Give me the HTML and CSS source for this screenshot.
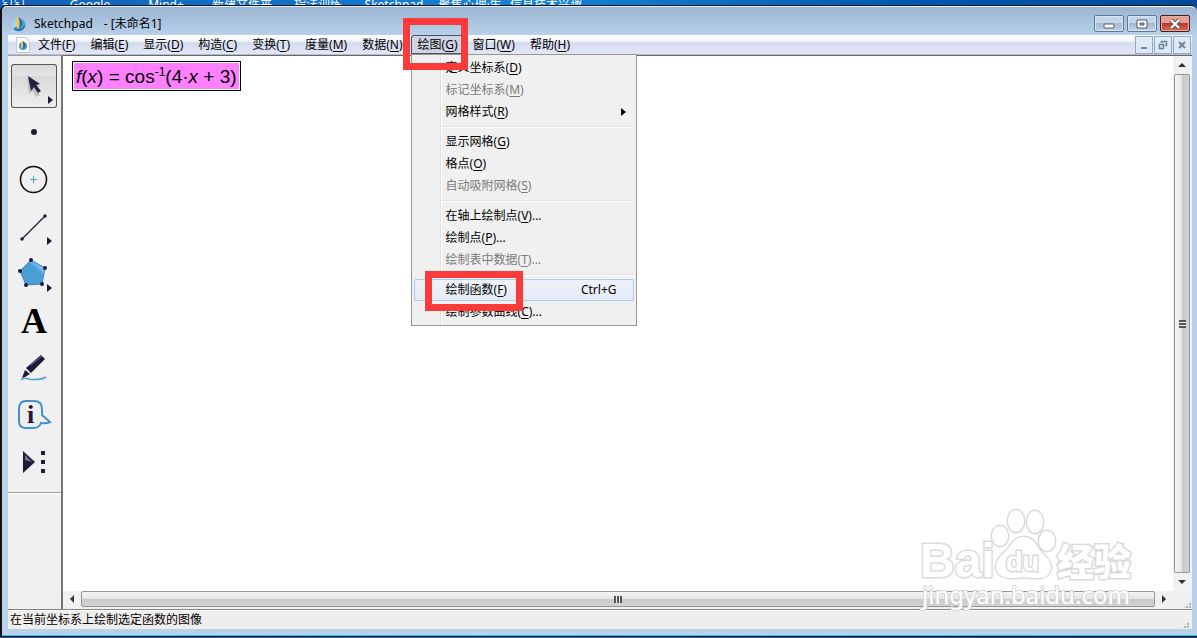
FILE: index.html
```html
<!DOCTYPE html>
<html lang="zh-CN">
<head>
    <meta charset="UTF-8">
    <meta name="viewport" content="width=device-width, initial-scale=1.0">
    <title>Sketchpad - [未命名1]</title>
    <link rel="stylesheet" href="styles.css">
</head>
<body>

    <div class="desktop-icons">
        <span>钉钉</span>
        <span>Google</span>
        <span>Mind+</span>
        <span>新建文件夹</span>
        <span>指法训练</span>
        <span>Sketchpad</span>
        <span>聚焦心理·生</span>
        <span>信息技术兴趣</span>
    </div>

    <div class="window">
        <header class="title-bar">
            <svg class="app-icon" width="16" height="16" viewBox="0 0 16 16">
                <circle cx="8" cy="9" r="6.500" fill="#4a9dd2"/>
                <path d="M2 12a6 6 0 0 1 4-9l1 7z" fill="#a5d6ef"/>
                <path d="M7 13C4 9 5 4 6 0c4 4 5 9 1 13z" fill="#f0c65a"/>
                <path d="M7 1c5 3 6 8 1 12 1-4 1-8-1-12z" fill="#1b6fa5"/>
                <path d="M3 13c3 2 8 1 11-3" fill="none" stroke="#17517d"/>
            </svg>
            <span class="app-name">Sketchpad</span>
            <span class="doc-name">- [未命名1]</span>
            <div class="window-buttons">
                <button aria-label="最小化">
                    <svg width="12" height="12" viewBox="0 0 12 12"><rect x="1" y="6" width="10" height="4" rx="1" fill="#fff" stroke="#555b68"/></svg>
                </button>
                <button aria-label="最大化">
                    <svg width="12" height="12" viewBox="0 0 12 12"><path d="M1 2h10v8H1z" fill="#fff" stroke="#555b68"/><path d="M4 5h4v2H4z" fill="#9bb4cd" stroke="#555b68"/></svg>
                </button>
                <button class="close" aria-label="关闭">
                    <svg width="12" height="12" viewBox="0 0 12 12"><path d="M2 2l8 8M10 2l-8 8" stroke="#5b4a50" stroke-width="4"/><path d="M2 2l8 8M10 2l-8 8" stroke="#fff" stroke-width="2.400"/></svg>
                </button>
            </div>
        </header>

        <div class="client">
            <nav class="menu-bar">
                <svg class="doc-icon" width="14" height="16" viewBox="0 0 14 16">
                    <path d="M.5.5h9l4 4v11H.5z" fill="#fff" stroke="#c3c8d0"/>
                    <circle cx="7" cy="9" r="4" fill="#3f97cf"/>
                    <path d="M6 12c-2-3-1-6 0-9 3 3 3 6 0 9z" fill="#f0c65a"/>
                    <path d="M7 4c3 3 3 6 0 8z" fill="#1b6fa5"/>
                </svg>
                <ul class="menus">
                    <li><button>文件(<u>F</u>)</button></li>
                    <li><button>编辑(<u>E</u>)</button></li>
                    <li><button>显示(<u>D</u>)</button></li>
                    <li><button>构造(<u>C</u>)</button></li>
                    <li><button>变换(<u>T</u>)</button></li>
                    <li><button>度量(<u>M</u>)</button></li>
                    <li><button>数据(<u>N</u>)</button></li>
                    <li class="open">
                        <button aria-expanded="true">绘图(<u>G</u>)</button>
                        <div class="dropdown">
                            <button>定义坐标系(<u>D</u>)</button>
                            <button disabled>标记坐标系(<u>M</u>)</button>
                            <button>网格样式(<u>R</u>)
                                <svg class="submenu" width="5" height="8" viewBox="0 0 5 8"><path d="M0 0l5 4-5 4z"/></svg>
                            </button>
                            <hr>
                            <button>显示网格(<u>G</u>)</button>
                            <button>格点(<u>O</u>)</button>
                            <button disabled>自动吸附网格(<u>S</u>)</button>
                            <hr>
                            <button>在轴上绘制点(<u>V</u>)...</button>
                            <button>绘制点(<u>P</u>)...</button>
                            <button disabled>绘制表中数据(<u>T</u>)...</button>
                            <hr>
                            <button class="active">绘制函数(<u>F</u>)<kbd>Ctrl+G</kbd><span class="mark mark-item"></span></button>
                            <button>绘制参数曲线(<u>C</u>)...</button>
                        </div>
                        <span class="mark mark-menu"></span>
                    </li>
                    <li><button>窗口(<u>W</u>)</button></li>
                    <li><button>帮助(<u>H</u>)</button></li>
                </ul>
                <div class="doc-buttons">
                    <button aria-label="最小化文档"><svg width="10" height="10" viewBox="0 0 10 10"><path d="M2 7h6v2H2z" fill="#71818f"/></svg></button>
                    <button aria-label="还原文档"><svg width="10" height="10" viewBox="0 0 10 10"><path d="M3.500 3V1.500h5v4H7M3 1.500h6" fill="none" stroke="#71818f" stroke-width="1.500"/><path d="M1.500 4.500h4v4h-4zM1 4.500h5" fill="none" stroke="#71818f" stroke-width="1.500"/></svg></button>
                    <button aria-label="关闭文档"><svg width="10" height="10" viewBox="0 0 10 10"><path d="M2 2l6 6M8 2L2 8" stroke="#71818f" stroke-width="2"/></svg></button>
                </div>
            </nav>

            <div class="workspace">
                <aside class="toolbox">
                    <button class="selected" aria-label="移动箭头工具">
                        <svg width="46" height="44" viewBox="0 0 46 44">
                            <path d="M16 14l13 8-4 2 4 7-4 2-3-6-4 3z" fill="#888" opacity=".4"/>
                            <path d="M17 12l12 8-4 1 5 6-3 2-4-6-3 4z" fill="#25203f"/>
                            <path d="M37 32l5 4-5 4z" fill="#1f1a38"/>
                        </svg>
                    </button>
                    <button aria-label="点工具">
                        <svg width="46" height="44" viewBox="0 0 46 44"><circle cx="23" cy="21" r="3" fill="#1f1a38"/></svg>
                    </button>
                    <button aria-label="圆工具">
                        <svg width="46" height="44" viewBox="0 0 46 44">
                            <circle cx="22.500" cy="21.500" r="13" fill="none" stroke="#111" stroke-width="1.600"/>
                            <path d="M19 21.500h7M22.500 18v7" stroke="#4a9dd2"/>
                        </svg>
                    </button>
                    <button aria-label="线段直尺工具">
                        <svg width="46" height="44" viewBox="0 0 46 44" fill="#1f1a38">
                            <path d="M11 34L34 11" stroke="#1f1a38" stroke-width="1.300"/>
                            <circle cx="11" cy="34" r="1.700"/><circle cx="34" cy="11" r="1.700"/>
                            <path d="M36 32l5 4-5 4z"/>
                        </svg>
                    </button>
                    <button aria-label="多边形工具">
                        <svg width="46" height="44" viewBox="0 0 46 44" fill="#1f1a38">
                            <defs><linearGradient id="poly" x1="1" y1="0" x2="0.300" y2="0.700"><stop offset=".2" stop-color="#9cd0f2"/><stop offset=".55" stop-color="#4a9dd6"/></linearGradient></defs>
                            <path d="M9 19L20 8l14 8-3 16-16 1z" fill="url(#poly)" stroke="#3a86bd"/>
                            <circle cx="9" cy="19" r="2"/><circle cx="20" cy="8" r="2"/><circle cx="34" cy="16" r="2"/><circle cx="31" cy="32" r="2"/><circle cx="15" cy="33" r="2"/>
                            <path d="M36 32l5 4-5 4z"/>
                        </svg>
                    </button>
                    <button class="text-tool" aria-label="文字工具">A</button>
                    <button aria-label="标记工具">
                        <svg width="46" height="44" viewBox="0 0 46 44">
                            <path d="M10 34c3-3 5-2 7-1 7 1 13 1 18-2" fill="none" stroke="#4a9dd6" stroke-width="1.600"/>
                            <path d="M11 32l3-8 5 4-5 3z" fill="#1f1a38"/>
                            <path d="M15 22L30 9l4 4-14 14z" fill="#1f1a38"/>
                            <path d="M20 19L31 10" stroke="#77738c"/>
                            <path d="M14 22l6 6" stroke="#efefef"/>
                        </svg>
                    </button>
                    <button class="info-tool" aria-label="信息工具">
                        <svg width="46" height="44" viewBox="0 0 46 44">
                            <path d="M15 8h8q8 0 8 8v6l8 7q-4 2-9 1-2 5-7 5h-8q-7 0-7-7V16q0-8 7-8z" fill="#efefef" stroke="#4391cd" stroke-width="2"/>
                            <text x="16" y="30" class="info-letter">i</text>
                        </svg>
                    </button>
                    <button aria-label="自定义工具">
                        <svg width="46" height="44" viewBox="0 0 46 44" fill="#1f1a38">
                            <path d="M12 11l12 11-12 11z"/><path d="M14 15l7 7-7-2z" fill="#77738c"/>
                            <path d="M30 11h4v4h-4zM30 20h4v4h-4zM30 29h4v4h-4z"/>
                        </svg>
                    </button>
                </aside>

                <div class="document">
                    <main class="canvas">
                        <div class="formula"><i>f</i>(<i>x</i>) = cos<sup>-1</sup>(4·<i>x</i> + 3)</div>
                        <svg class="watermark" width="220" height="106" viewBox="0 0 220 106">
                            <g class="outline">
                                <text class="brand" x="2" y="71">Bai</text>
                                <ellipse cx="82" cy="30" rx="8" ry="10"/>
                                <ellipse cx="98" cy="15" rx="8" ry="11"/>
                                <ellipse cx="117" cy="16" rx="8" ry="11"/>
                                <ellipse cx="129" cy="35" rx="8" ry="10"/>
                                <path d="M106 31c7 0 11 5 15 12 5 7 12 11 12 18-1 13-13 12-27 10-14 2-26 2-28-9-1-8 7-14 12-19 4-7 8-12 16-12z"/>
                                <text class="du" x="88" y="65">du</text>
                                <text class="jingyan" x="139" y="70">经验</text>
                            </g>
                            <text class="site" x="4" y="98">jingyan.baidu.com</text>
                        </svg>
                    </main>
                    <div class="scrollbar vertical">
                        <button aria-label="向上滚动"><svg width="8" height="4" viewBox="0 0 8 4"><path d="M0 4l4-4 4 4z"/></svg></button>
                        <div class="thumb"><span></span></div>
                        <button aria-label="向下滚动"><svg width="8" height="4" viewBox="0 0 8 4"><path d="M0 0l4 4 4-4z"/></svg></button>
                    </div>
                    <div class="scrollbar horizontal">
                        <button aria-label="向左滚动"><svg width="4" height="8" viewBox="0 0 4 8"><path d="M4 0L0 4l4 4z"/></svg></button>
                        <div class="thumb"><span></span></div>
                        <button aria-label="向右滚动"><svg width="4" height="8" viewBox="0 0 4 8"><path d="M0 0l4 4-4 4z"/></svg></button>
                    </div>
                    <div class="grip"></div>
                </div>
            </div>

            <footer class="status-bar">
                <span>在当前坐标系上绘制选定函数的图像</span>
                <div class="grip"></div>
            </footer>
        </div>
    </div>

</body>
</html>
```

FILE: styles.css
```css
* {
    box-sizing: border-box;
}

body {
    margin: 0;
    height: 100vh;
    display: flex;
    flex-direction: column;
    overflow: hidden;
    background: linear-gradient(90deg, #1060b8, #1583d8 45%, #0058b5 75%, #004a9c);
    font-family: "Noto Sans", "Noto Sans CJK SC", sans-serif;
    font-size: 12px;
    line-height: 18px;
    color: #000;
}

button {
    margin: 0;
    padding: 0;
    border: none;
    background: none;
    font: inherit;
    color: inherit;
}

u {
    text-underline-offset: 2px;
}

/* desktop labels behind the window */
.desktop-icons {
    display: grid;
    grid-template-columns: repeat(8, 76px);
    height: 5px;
    margin-left: -24px;
    overflow: hidden;
    color: #fff;
    line-height: 10px;
    text-align: center;
    white-space: nowrap;
}

.window {
    flex: 1;
    min-height: 0;
    display: flex;
    flex-direction: column;
    margin-bottom: 1px;
    padding: 0 5px 7px 6px;
    border: 1px solid #111;
    border-right: none;
    border-left-width: 2px;
    border-radius: 6px 6px 0 0;
    background: linear-gradient(#99b4d1, #b9d1ea 30px);
    box-shadow: inset 0 1px #e8f1fa, inset 0 -1px #3cc3dc;
}

.title-bar {
    display: flex;
    align-items: center;
    height: 29px;
    padding: 6px 0 0 3px;
    flex: none;
}

.app-name {
    margin-left: 7px;
}

.doc-name {
    margin-left: 11px;
}

.window-buttons {
    display: flex;
    gap: 3px;
    margin-left: auto;
    margin-right: 2px;
}

.window-buttons button {
    display: flex;
    align-items: center;
    justify-content: center;
    width: 30px;
    height: 17px;
    border: 1px solid #5f7893;
    border-radius: 2px;
    background: linear-gradient(#c3d5e8 50%, #a2bad3 50%, #bcd3e9);
    box-shadow: inset 0 0 0 1px #d9e6f2;
}

.window-buttons .close {
    border-color: #4d1720;
    background: linear-gradient(#dfa193 50%, #b93a28 50%, #cf6f57);
    box-shadow: inset 0 0 0 1px #e7aea0;
}

.client {
    flex: 1;
    min-height: 0;
    display: flex;
    flex-direction: column;
    background: #f0f0f0;
}

/* menu bar */
.menu-bar {
    display: flex;
    align-items: center;
    flex: none;
    height: 20px;
    padding: 0 1px 0 8px;
    background: linear-gradient(#fff, #eef1f8 7px, #d5dbee 7px, #e2e7f6);
    border-bottom: 1px solid #b6bcc8;
}

.menus {
    display: flex;
    gap: 1px;
    margin: 0 0 0 1px;
    padding: 0;
    list-style: none;
}

.menus > li {
    position: relative;
}

.menus > li > button {
    display: block;
    height: 19px;
    padding: 1px 7px 0;
    border-radius: 3px 3px 0 0;
    white-space: nowrap;
}

.menus > .open > button {
    background: #ced3e5;
    box-shadow: inset 0 0 0 1px #50545f;
}

.doc-buttons {
    display: flex;
    gap: 1px;
    margin-left: auto;
}

.doc-buttons button {
    display: flex;
    align-items: center;
    justify-content: center;
    width: 18px;
    height: 18px;
    border: 1px solid #91a8bd;
    background: #ddebf9;
}

.dropdown {
    position: absolute;
    top: 100%;
    left: 0;
    z-index: 2;
    width: 226px;
    padding: 2px;
    border: 1px solid #979797;
    background: linear-gradient(90deg, #f0f0f0 28px, #e0e0e0 28px, #e0e0e0 29px, #fff 29px, #fff 30px, #f0f0f0 30px);
}

.dropdown button {
    position: relative;
    display: flex;
    align-items: center;
    width: 100%;
    height: 22px;
    padding: 0 17px 0 32px;
    border-radius: 2px;
    white-space: nowrap;
}

.dropdown button:disabled {
    color: #7a7a7a;
}

.dropdown .active {
    background: linear-gradient(#eff3f9, #e4ebf5);
    box-shadow: inset 0 0 0 1px #aaccf3;
}

.dropdown hr {
    height: 2px;
    margin: 3px 0 3px 28px;
    border: none;
    border-top: 1px solid #e0e0e0;
    background: #fff;
}

.dropdown kbd {
    margin-left: auto;
    font-family: inherit;
}

.submenu {
    margin-left: auto;
    margin-right: -9px;
}

/* red marker frames */
.mark {
    position: absolute;
    z-index: 3;
    border: 7px solid #fb3a3a;
    pointer-events: none;
}

.mark-menu {
    inset: -17px -4px -16px -8px;
}

.mark-item {
    top: -8px;
    left: 11px;
    width: 98px;
    height: 40px;
}

/* work area */
.workspace {
    flex: 1;
    min-height: 0;
    display: flex;
    border-bottom: 1px solid #868686;
}

.toolbox {
    display: flex;
    flex-direction: column;
    flex: none;
    width: 55px;
    gap: 3px;
    padding: 8px 3px 0;
    border-top: 1px solid #a0a0a0;
    border-right: 2px solid #767676;
}

.toolbox::after {
    content: "";
    margin: 5px -3px 0;
    border-top: 1px solid #a0a0a0;
    border-bottom: 1px solid #fff;
}

.toolbox button {
    display: flex;
    align-items: center;
    justify-content: center;
    width: 46px;
    height: 44px;
}

.toolbox .selected {
    border-radius: 3px;
    background: linear-gradient(#d9d9d9, #e4e4e4 26%, #d9d9d9 27%, #efefef);
    box-shadow: inset 0 0 0 1px #555;
}

.toolbox .text-tool {
    font: bold 36px/44px "Liberation Serif", serif;
}

.info-letter {
    font: bold 26px "Liberation Serif", serif;
    fill: #1f1a38;
}

.document {
    flex: 1;
    min-width: 0;
    display: grid;
    grid-template-columns: 1fr 19px;
    grid-template-rows: 1fr 18px;
    border-top: 1px solid #696969;
    background: #f0f0f0;
}

.canvas {
    position: relative;
    padding: 5px 9px;
    background: #fff;
}

.formula {
    width: fit-content;
    height: 30px;
    padding: 0 3px;
    border: 1px solid #000;
    background: #ff80ff;
    box-shadow: inset 0 0 0 1px #fff;
    font: 19px/30px "Liberation Sans", sans-serif;
    white-space: nowrap;
}

.formula sup {
    font-size: 12px;
    line-height: 0;
}

.watermark {
    position: absolute;
    right: 35px;
    bottom: -21px;
    z-index: 1;
}

.outline {
    fill: #fff;
    stroke: #dadada;
    stroke-width: 3px;
    paint-order: stroke;
}

.brand {
    font: bold 48px "Liberation Sans", sans-serif;
}

.du {
    font: bold 27px "Liberation Sans", sans-serif;
}

.jingyan {
    font: 900 37px "Noto Sans CJK SC", sans-serif;
}

.site {
    font: 24px "Noto Sans", sans-serif;
    fill: #fff;
    stroke: #d4d4d4;
    stroke-width: 2px;
    paint-order: stroke;
}

/* scroll bars */
.scrollbar {
    display: flex;
    background: #f1f1f1;
}

.scrollbar button {
    display: flex;
    align-items: center;
    justify-content: center;
    flex: none;
    width: 18px;
    height: 18px;
    fill: #333;
}

.scrollbar .thumb {
    flex: 1;
    display: flex;
    align-items: center;
    justify-content: center;
    border: 1px solid #959595;
    border-radius: 2px;
}

.vertical {
    flex-direction: column;
    padding: 0 2px 0 1px;
}

.vertical button {
    width: auto;
}

.vertical .thumb {
    background: linear-gradient(90deg, #f4f4f4, #e5e5e5 50%, #c9cacc 50%, #d2d2d4);
}

.vertical .thumb span {
    width: 7px;
    height: 8px;
    background: repeating-linear-gradient(#555 0 2px, #eee 2px 3px);
}

.horizontal {
    padding-bottom: 2px;
}

.horizontal button {
    height: auto;
}

.horizontal .thumb {
    background: linear-gradient(#f4f4f4, #e5e5e5 50%, #c9cacc 50%, #d2d2d4);
}

.horizontal .thumb span {
    width: 8px;
    height: 7px;
    background: repeating-linear-gradient(90deg, #555 0 2px, #eee 2px 3px);
}

.grip {
    width: 9px;
    height: 9px;
    place-self: end;
    background: radial-gradient(circle at 1px 1px, #b0b0b0 1px, transparent 1px) 0 0 / 3px 3px;
    clip-path: polygon(100% 0, 100% 100%, 0 100%);
}

.status-bar {
    display: flex;
    align-items: center;
    flex: none;
    height: 19px;
    padding: 0 2px;
    border-top: 1px solid #fff;
    background: #f0eded;
}

.status-bar .grip {
    margin-left: auto;
}
```
